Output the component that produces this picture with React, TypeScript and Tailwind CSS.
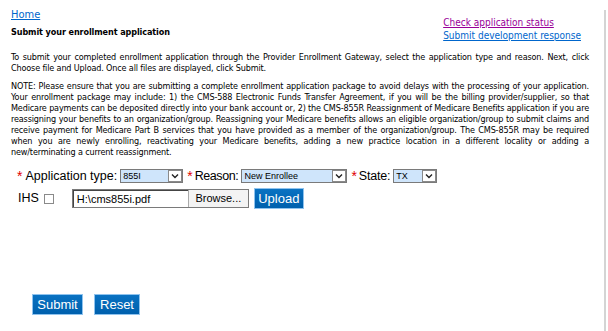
import React from "react";

function Select({ value, width }: { value: string; width: string }) {
  return (
    <div className={`flex h-[14px] items-stretch border border-[#7a7a7a] bg-[#cfe5fb] ${width}`}>
      <div className="flex-1 pl-[2px] text-[9px] leading-[12px] text-black font-['Liberation_Sans',sans-serif]">{value}</div>
      <div className="flex w-[14px] items-center justify-center border border-[#8a8a8a] bg-white">
        <svg width="8" height="6" viewBox="0 0 8 6"><path d="M1 1.5 L4 4.5 L7 1.5" stroke="#222" strokeWidth="1.4" fill="none" /></svg>
      </div>
    </div>
  );
}

function BlueBtn({ children, w }: { children: React.ReactNode; w: string }) {
  return (
    <div className={`flex h-[21px] ${w} items-center justify-center border border-[#8fc3ee] bg-gradient-to-b from-[#0a72c2] to-[#0060ad] text-[13px] text-white font-['Liberation_Sans',sans-serif]`}>
      {children}
    </div>
  );
}

export default function App() {
  return (
    <div className="relative h-[331px] w-[608px] overflow-hidden bg-white font-['DejaVu_Sans_Condensed','DejaVu_Sans',sans-serif] text-black">
      <div className="absolute right-[2px] top-[10px] bottom-0 w-[2px] bg-[#d4d4d4]" />
      <div className="w-[600px] pl-[11px] pr-[11px] pt-[8px]">
        <div className="flex justify-between">
          <div>
            <div className="text-[11px] leading-[13px] text-[#0066cc] underline">Home</div>
            <div className="mt-[6px] text-[9px] font-bold leading-[11px] tracking-[-0.1px]">Submit your enrollment application</div>
          </div>
          <div className="pr-[8px] pt-[8px] text-[10px] leading-[13px]">
            <div className="text-[#990099] underline">Check application status</div>
            <div className="text-[#0066cc] underline">Submit development response</div>
          </div>
        </div>
        <p className="mt-[10px] text-justify text-[9px] leading-[11px] tracking-[-0.15px]">
          To submit your completed enrollment application through the Provider Enrollment Gateway, select the application type and reason. Next, click Choose file and Upload. Once all files are displayed, click Submit.
        </p>
        <p className="mt-[7px] text-justify text-[9px] leading-[11px] tracking-[-0.15px]">
          NOTE: Please ensure that you are submitting a complete enrollment application package to avoid delays with the processing of your application. Your enrollment package may include: 1) the CMS-588 Electronic Funds Transfer Agreement, if you will be the billing provider/supplier, so that Medicare payments can be deposited directly into your bank account or, 2) the CMS-855R Reassignment of Medicare Benefits application if you are reassigning your benefits to an organization/group. Reassigning your Medicare benefits allows an eligible organization/group to submit claims and receive payment for Medicare Part B services that you have provided as a member of the organization/group. The CMS-855R may be required when you are newly enrolling, reactivating your Medicare benefits, adding a new practice location in a different locality or adding a new/terminating a current reassignment.
        </p>
        <div className="mt-[10px] flex items-center pl-[6px] font-['Liberation_Sans',sans-serif] text-[12.5px] leading-[16px]">
          <span className="text-[14px] text-[#e00000]">*</span>
          <span className="ml-[3px]">Application type:</span>
          <div className="ml-[3px]"><Select value="855I" width="w-[63px]" /></div>
          <span className="ml-[4px] text-[14px] text-[#e00000]">*</span>
          <span className="ml-[2px] tracking-[-0.4px]">Reason:</span>
          <div className="ml-[3px]"><Select value="New Enrollee" width="w-[106px]" /></div>
          <span className="ml-[4px] text-[14px] text-[#e00000]">*</span>
          <span className="ml-[2px] tracking-[-0.2px]">State:</span>
          <div className="ml-[3px]"><Select value="TX" width="w-[44px]" /></div>
        </div>
        <div className="mt-[4px] flex items-center pl-[7px] font-['Liberation_Sans',sans-serif] text-[12.5px]">
          <span>IHS</span>
          <div className="ml-[5px] h-[10px] w-[10px] border border-[#8a8a8a] bg-white" />
          <div className="ml-[18px] flex h-[19px] w-[177px] border border-[#7a7a7a]">
            <div className="flex-1 border-t border-l border-[#444] pl-[3px] text-[11px] leading-[16px]">H:\cms855i.pdf</div>
            <div className="flex w-[60px] items-center justify-center border-l border-[#aaa] bg-[#f3f3f3] text-[11px]">Browse...</div>
          </div>
          <div className="ml-[5px]"><BlueBtn w="w-[50px]">Upload</BlueBtn></div>
        </div>
        <div className="mt-[85px] flex gap-[11px] pl-[21px]">
          <BlueBtn w="w-[51px]">Submit</BlueBtn>
          <BlueBtn w="w-[46px]">Reset</BlueBtn>
        </div>
      </div>
    </div>
  );
}
